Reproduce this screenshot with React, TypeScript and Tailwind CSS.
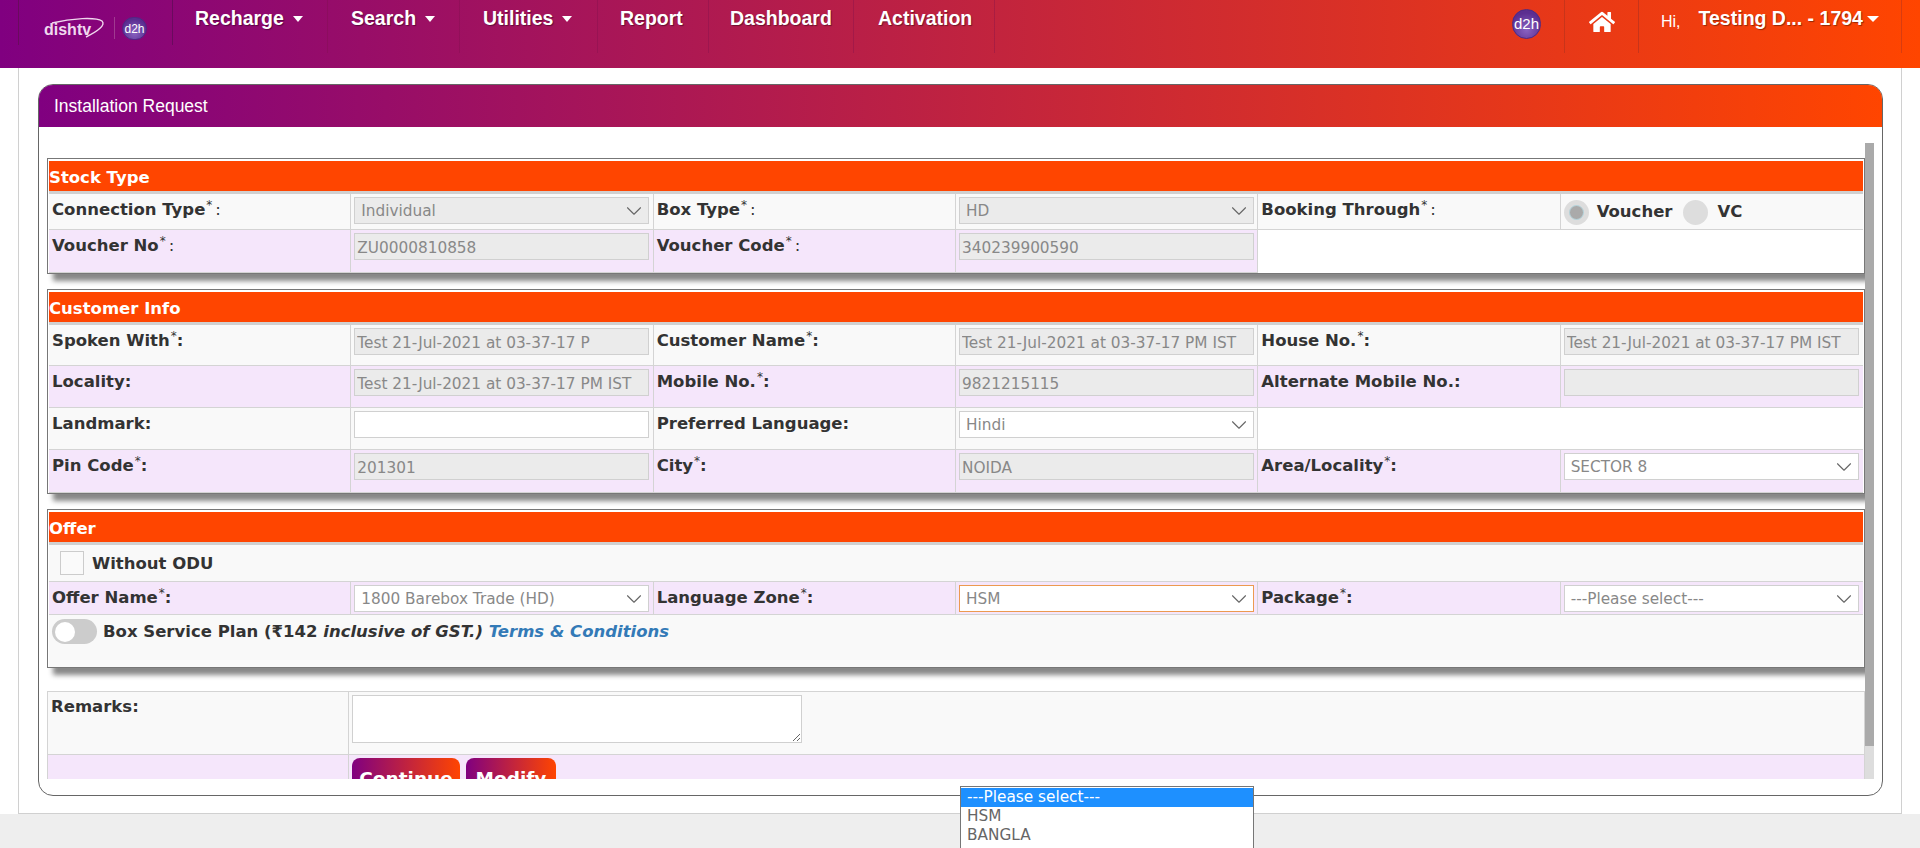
import React from 'react';
import { ChevronDown } from 'lucide-react';
import { FaHome } from 'react-icons/fa';

const tahoma = "font-['DejaVu_Sans',sans-serif]";
const arial = "font-['Liberation_Sans',Arial,sans-serif]";
const brand = 'bg-[linear-gradient(to_right,#800080,#ff4500)]';

function Caret({ className }: { className: string }) {
  return <span className={`block h-0 w-0 border-t-[6.5px] border-x-transparent border-t-white ${className}`} />;
}

function NavItem({ label, menu, className }: { label: string; menu?: boolean; className: string }) {
  return (
    <div className={`flex h-[53px] items-start border-r border-[#7a0f4a55] pt-[4px] text-[19.5px] font-bold text-white [text-shadow:1px_1px_1px_#0006] ${className}`}>
      <span>{label}</span>
      {menu && <Caret className="ml-[9px] mt-[12px] border-x-[5.5px]" />}
    </div>
  );
}

function D2hBadge({ className }: { className: string }) {
  return (
    <div className={`flex items-center justify-center rounded-full border border-[#4b2a86] bg-[radial-gradient(circle_at_50%_70%,#8a63c2,#5b2d90_70%)] ${arial} text-white ${className}`}>
      d2h
    </div>
  );
}

function Header() {
  return (
    <header className={`flex h-[68px] ${brand} ${arial}`}>
      <div className="ml-[18px] flex h-[45px] w-[155px] items-start border-x border-[#6a0a5e]">
        <div className="relative ml-[25px] mt-[17px] h-[24px] w-[62px]">
          <span className="absolute left-0 top-[5px] text-[16px] font-bold leading-[16px] text-[#f0d8ee]">dishtv</span>
          <svg className="absolute left-[6px] top-0" width="60" height="22" viewBox="0 0 60 22" fill="none">
            <path d="M2 6 C22 1 46 0 52 4 C56 8 48 14 36 20" stroke="#f0d8ee" strokeWidth="1.4" />
          </svg>
        </div>
        <div className="ml-[8px] mt-[17px] h-[22px] w-px bg-[#a03a90]" />
        <D2hBadge className="ml-[7px] mt-[17px] h-[23px] w-[25px] text-[12px]" />
      </div>
      <NavItem label="Recharge" menu className="w-[155px] pl-[22px]" />
      <NavItem label="Search" menu className="w-[132px] pl-[23px]" />
      <NavItem label="Utilities" menu className="w-[138px] pl-[23px]" />
      <NavItem label="Report" className="w-[111px] pl-[22px]" />
      <NavItem label="Dashboard" className="w-[145px] pl-[21px]" />
      <NavItem label="Activation" className="w-[141px] pl-[24px]" />
      <div className="flex-1" />
      <div className="flex h-[53px] w-[53px] items-start border-r border-[#c8341a]">
        <D2hBadge className="mt-[9px] h-[30px] w-[29px] text-[15px]" />
      </div>
      <div className="flex h-[53px] w-[74px] items-start justify-center border-r border-[#c8341a] pt-[9px]">
        <FaHome size={26} className="text-white" />
      </div>
      <div className="flex h-[53px] w-[263px] items-start border-r border-[#d83c10] pl-[22px] pt-[4px] text-white">
        <span className="mt-[6px] text-[16px] font-normal">Hi,</span>
        <span className="ml-[18px] text-[19.5px] font-bold [text-shadow:1px_1px_1px_#0006]">Testing D... - 1794</span>
        <Caret className="ml-[4px] mt-[12px] border-x-[6.5px]" />
      </div>
      <div className="w-[18px]" />
    </header>
  );
}

function Label({ text, star, spaced }: { text: string; star?: boolean; spaced?: boolean }) {
  return (
    <div className={`whitespace-nowrap pl-[3px] pt-[4px] ${tahoma} text-[16.5px] font-bold leading-[24px] text-[#333]`}>
      {text}
      {star && <sup className="ml-px text-[12px] font-normal leading-none">*</sup>}
      <span className={spaced ? 'ml-[3px] font-normal' : ''}>:</span>
    </div>
  );
}

function TextBox({ value, disabled = true }: { value?: string; disabled?: boolean }) {
  return (
    <input
      readOnly
      value={value ?? ''}
      className={`mx-[3px] mt-[3px] h-[27px] w-[295px] border border-[#d0d0d0] px-[2px] pt-[2px] ${tahoma} text-[15.3px] text-[#888] outline-none ${disabled ? 'bg-[#ebebeb]' : 'bg-white'}`}
    />
  );
}

function SelectBox({ value, disabled, focused }: { value: string; disabled?: boolean; focused?: boolean }) {
  return (
    <div className={`mx-[3px] mt-[3px] flex h-[27px] w-[295px] items-center justify-between border pl-[6px] pr-px ${tahoma} text-[15.3px] text-[#888] ${disabled ? 'bg-[#ebebeb]' : 'bg-white'} ${focused ? 'border-[#ec9a50] text-[#666]' : 'border-[#d0d0d0]'}`}>
      <span className="pt-[2px]">{value}</span>
      <ChevronDown size={26} strokeWidth={1} className="text-[#666]" />
    </div>
  );
}

function Cell({ children, last }: { children?: React.ReactNode; last?: boolean }) {
  return <div className={`border-b border-[#d4d4d4] ${last ? '' : 'border-r'}`}>{children}</div>;
}

function Section({ title, children, className }: { title: string; children: React.ReactNode; className?: string }) {
  return (
    <section className={`w-[1818px] border border-[#777] bg-white px-px pt-[2px] shadow-[6px_7px_5px_#888] ${className ?? ''}`}>
      <div className={`h-[30px] bg-[#ff4500] pt-[2px] ${tahoma} text-[16.5px] font-bold leading-[30px] text-white`}>{title}</div>
      <div className="h-[3px] bg-[#d0d0d0]" />
      {children}
    </section>
  );
}

function Row({ tall, shaded, children }: { tall: string; shaded?: boolean; children: React.ReactNode }) {
  return <div className={`grid grid-cols-6 ${tall} ${shaded ? 'bg-[#f5e6fb]' : 'bg-[#f9f9f9]'}`}>{children}</div>;
}

function StockType() {
  return (
    <Section title="Stock Type">
      <Row tall="h-[36px]">
        <Cell><Label text="Connection Type" star spaced /></Cell>
        <Cell><SelectBox value="Individual" disabled /></Cell>
        <Cell><Label text="Box Type" star spaced /></Cell>
        <Cell><SelectBox value="HD" disabled /></Cell>
        <Cell><Label text="Booking Through" star spaced /></Cell>
        <Cell last>
          <div className={`flex items-center pl-[3px] pt-[6px] ${tahoma} text-[16.5px] font-bold text-[#333]`}>
            <span className="flex size-[25px] items-center justify-center rounded-full bg-[#ddd]">
              <span className="size-[15px] rounded-full border border-[#b5d5dd] bg-[#aaa]" />
            </span>
            <span className="ml-[8px]">Voucher</span>
            <span className="ml-[11px] size-[25px] rounded-full bg-[#ddd]" />
            <span className="ml-[9px]">VC</span>
          </div>
        </Cell>
      </Row>
      <Row tall="h-[43px]" shaded>
        <Cell><Label text="Voucher No" star spaced /></Cell>
        <Cell><TextBox value="ZU0000810858" /></Cell>
        <Cell><Label text="Voucher Code" star spaced /></Cell>
        <Cell><TextBox value="340239900590" /></Cell>
        <div className="col-span-2 bg-white" />
      </Row>
    </Section>
  );
}

function CustomerInfo() {
  const stamp = 'Test 21-Jul-2021 at 03-37-17 PM IST';
  return (
    <Section title="Customer Info" className="mt-[15px]">
      <Row tall="h-[41px]">
        <Cell><Label text="Spoken With" star /></Cell>
        <Cell><TextBox value="Test 21-Jul-2021 at 03-37-17 P" /></Cell>
        <Cell><Label text="Customer Name" star /></Cell>
        <Cell><TextBox value={stamp} /></Cell>
        <Cell><Label text="House No." star /></Cell>
        <Cell last><TextBox value={stamp} /></Cell>
      </Row>
      <Row tall="h-[42px]" shaded>
        <Cell><Label text="Locality" /></Cell>
        <Cell><TextBox value={stamp} /></Cell>
        <Cell><Label text="Mobile No." star /></Cell>
        <Cell><TextBox value="9821215115" /></Cell>
        <Cell><Label text="Alternate Mobile No." /></Cell>
        <Cell last><TextBox /></Cell>
      </Row>
      <Row tall="h-[42px]">
        <Cell><Label text="Landmark" /></Cell>
        <Cell><TextBox disabled={false} /></Cell>
        <Cell><Label text="Preferred Language" /></Cell>
        <Cell><SelectBox value="Hindi" /></Cell>
        <div className="col-span-2 border-b border-[#d4d4d4] bg-white" />
      </Row>
      <Row tall="h-[43px]" shaded>
        <Cell><Label text="Pin Code" star /></Cell>
        <Cell><TextBox value="201301" /></Cell>
        <Cell><Label text="City" star /></Cell>
        <Cell><TextBox value="NOIDA" /></Cell>
        <Cell><Label text="Area/Locality" star /></Cell>
        <Cell last><SelectBox value="SECTOR 8" /></Cell>
      </Row>
    </Section>
  );
}

function Offer() {
  return (
    <Section title="Offer" className="mt-[15px]">
      <div className={`flex h-[37px] items-center border-b border-[#d4d4d4] bg-[#f9f9f9] pl-[11px] ${tahoma} text-[16.5px] font-bold text-[#333]`}>
        <span className="size-[24px] border border-[#ccc] bg-[#fafafa]" />
        <span className="ml-[8px] pt-[2px]">Without ODU</span>
      </div>
      <Row tall="h-[33px]" shaded>
        <Cell><Label text="Offer Name" star /></Cell>
        <Cell><SelectBox value="1800 Barebox Trade (HD)" /></Cell>
        <Cell><Label text="Language Zone" star /></Cell>
        <Cell><SelectBox value="HSM" focused /></Cell>
        <Cell><Label text="Package" star /></Cell>
        <Cell last><SelectBox value="---Please select---" /></Cell>
      </Row>
      <div className={`flex h-[52px] items-start bg-[#f9f9f9] pl-[3px] pt-[4px] ${tahoma} text-[16.5px] font-bold leading-[25px] text-[#333]`}>
        <span className="flex h-[25px] w-[45px] items-center rounded-full bg-[#ccc] pl-[3px]">
          <span className="size-[20px] rounded-full bg-white" />
        </span>
        <span className="ml-[6px] whitespace-nowrap">
          Box Service Plan (₹142 <i>inclusive of GST.)</i> <i className="text-[#337ab7]">Terms &amp; Conditions</i>
        </span>
      </div>
    </Section>
  );
}

function Remarks() {
  return (
    <div className="mt-[23px] w-[1818px] border-t border-[#d4d4d4]">
      <div className="flex h-[63px] border-x border-b border-[#d4d4d4] bg-[#f9f9f9]">
        <div className="w-[301px] border-r border-[#d4d4d4] pl-[3px] pt-[3px]">
          <div className={`${tahoma} text-[16.5px] font-bold leading-[24px] text-[#333]`}>Remarks:</div>
        </div>
        <textarea readOnly className="ml-[3px] mt-[3px] h-[48px] w-[450px] border border-[#d0d0d0] bg-white outline-none" />
      </div>
      <div className="flex h-[60px] border-x border-[#d4d4d4] bg-[#f5e6fb]">
        <div className="w-[301px] border-r border-[#d4d4d4]" />
        <button className={`ml-[3px] mt-[3px] h-[42px] w-[108px] rounded-[8px] ${brand} ${tahoma} text-[18.5px] font-bold text-white`}>Continue</button>
        <button className={`ml-[6px] mt-[3px] h-[42px] w-[90px] rounded-[8px] ${brand} ${tahoma} text-[18.5px] font-bold text-white`}>Modify</button>
      </div>
    </div>
  );
}

export default function App() {
  return (
    <div className="relative h-[848px] w-full overflow-hidden bg-[#eeeeee]">
      <Header />
      <main className="h-[746px] bg-white">
        <div className="mx-[18px] h-full border-x border-b border-[#d0d0d0] pt-[16px]">
          <div className="ml-[19px] h-[712px] w-[1845px] rounded-[15px] border border-[#666] bg-white">
            <div className={`flex h-[42px] items-center rounded-t-[14px] ${brand} pl-[15px] ${arial} text-[17.5px] text-white`}>
              Installation Request
            </div>
            <div className="relative ml-[8px] mt-[16px] h-[636px] w-[1827px] overflow-hidden pt-[15px]">
              <StockType />
              <CustomerInfo />
              <Offer />
              <Remarks />
              <div className="absolute right-0 top-0 h-full w-[9px] bg-[#ddd]">
                <div className="h-[603px] bg-[#aaa]" />
              </div>
            </div>
          </div>
        </div>
      </main>
      <div className={`absolute left-[960px] top-[786px] h-[70px] w-[294px] border border-[#767676] bg-white pt-px ${tahoma} text-[15.3px] leading-[19px] text-[#666]`}>
        <div className="bg-[#1e90ff] pl-[6px] text-white">---Please select---</div>
        <div className="pl-[6px]">HSM</div>
        <div className="pl-[6px]">BANGLA</div>
      </div>
    </div>
  );
}
